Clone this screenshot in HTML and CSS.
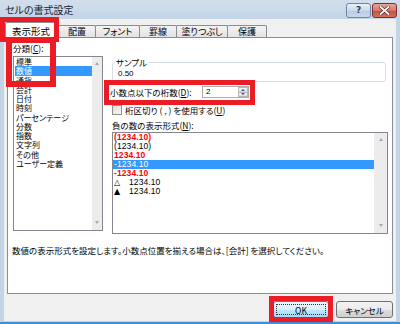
FILE: index.html
```html
<!DOCTYPE html>
<html lang="ja">
<head>
<meta charset="utf-8">
<title>セルの書式設定</title>
<link rel="stylesheet" href="styles.css">
</head>
<body>
<div class="window">
  <div class="titlebar">
    <span class="title">セルの書式設定</span>
    <div class="caption-btns">
      <span class="cbtn help">?</span>
      <span class="cbtn close"><svg width="11" height="9" viewBox="0 0 11 9"><path d="M1.5 1 L9.5 8 M9.5 1 L1.5 8" stroke="#5a2020" stroke-width="3.2" stroke-linecap="square"/><path d="M1.5 1 L9.5 8 M9.5 1 L1.5 8" stroke="#fff" stroke-width="1.8" stroke-linecap="square"/></svg></span>
    </div>
  </div>
  <div class="client">
    <div class="tabs">
      <div class="tab active">表示形式</div>
      <div class="tab w38">配置</div>
      <div class="tab w45">フォント</div>
      <div class="tab w38">罫線</div>
      <div class="tab w52">塗りつぶし</div>
      <div class="tab w40">保護</div>
    </div>
    <div class="panel">
      <div class="cols">
        <div class="left">
          <div class="lbl">分類(<u>C</u>):</div>
          <div class="listbox cat">
            <ul class="items">
              <li>標準</li>
              <li class="sel">数値</li>
              <li>通貨</li>
              <li>会計</li>
              <li>日付</li>
              <li>時刻</li>
              <li>パーセンテージ</li>
              <li>分数</li>
              <li>指数</li>
              <li>文字列</li>
              <li>その他</li>
              <li>ユーザー定義</li>
            </ul>
            <div class="vscroll"><span class="arr up"></span><span class="arr down"></span></div>
          </div>
        </div>
        <div class="right">
          <fieldset class="sample">
            <legend>サンプル</legend>
            <div class="sample-val">0.50</div>
          </fieldset>
          <div class="decimals">
            <span class="dec-lbl">小数点以下の桁数(<u>D</u>):</span>
            <div class="spin">
              <span class="spin-val">2</span>
              <div class="spin-btns">
                <span class="sb"><span class="tri up"></span></span>
                <span class="sb"><span class="tri down"></span></span>
              </div>
            </div>
          </div>
          <div class="chk"><span class="box"></span><span>桁区切り ( , ) を使用する(<u>U</u>)</span></div>
          <div class="lbl neg-lbl">負の数の表示形式(<u>N</u>):</div>
          <div class="listbox neg">
            <ul class="items">
              <li class="red">(1234.10)</li>
              <li>(1234.10)</li>
              <li class="red">1234.10</li>
              <li class="sel">-1234.10</li>
              <li class="red">-1234.10</li>
              <li><span class="tri-g">△</span>1234.10</li>
              <li><span class="tri-g">▲</span>1234.10</li>
            </ul>
            <div class="vscroll wide"><span class="arr up"></span><span class="arr down"></span></div>
          </div>
        </div>
      </div>
      <p class="desc">数値の表示形式を設定します。小数点位置を揃える場合は、[会計] を選択してください。</p>
    </div>
    <div class="buttons">
      <button class="btn ok"><span class="focus">OK</span></button>
      <button class="btn cancel">キャンセル</button>
    </div>
  </div>
</div>
<div class="mark mark-a"></div>
<div class="mark mark-b"></div>
<div class="mark mark-c"></div>
<div class="mark mark-d"></div>
</body>
</html>
```
FILE: styles.css
```css
* { box-sizing: border-box; }
html, body { margin: 0; padding: 0; }
body {
  width: 400px;
  height: 324px;
  overflow: hidden;
  position: relative;
  font-family: "Noto Sans CJK JP", "Noto Sans", sans-serif;
  font-size: 8.5px;
  font-feature-settings: "palt";
  color: #000;
  background: #c3d4e7;
}
u { text-decoration: underline; text-underline-offset: 1px; }

.window {
  width: 400px;
  height: 324px;
  display: flex;
  flex-direction: column;
  background: #c3d4e7;
  padding: 0 4px 1px;
  border-bottom: 2px solid #3f8fd6;
}

.titlebar {
  height: 19px;
  flex: none;
  margin: 0 -4px;
  padding: 0 3px 0 5px;
  display: flex;
  align-items: center;
  justify-content: space-between;
  background: linear-gradient(#d2deec, #c3d4e7);
}
.title { font-size: 10px; color: #1b2533; line-height: 12px; }
.caption-btns { display: flex; gap: 1px; margin-top: 1px; }
.cbtn {
  width: 25px;
  height: 15px;
  border-radius: 3px;
  display: flex;
  align-items: center;
  justify-content: center;
}
.help {
  border: 1px solid #6a86a8;
  background: linear-gradient(#e9f0f8, #cbd9ea 50%, #b9cbe1 51%, #c9d9ec);
  color: #2c3f5c;
  font-family: "DejaVu Sans", sans-serif;
  font-size: 9px;
  font-weight: bold;
  line-height: 1;
}
.close {
  border: 1px solid #7d3030;
  background: linear-gradient(#e6a595, #d67868 50%, #c4503c 51%, #d2705a);
}

.client {
  flex: 1;
  background: #f0f0f0;
  padding: 3px 3px 0;
  display: flex;
  flex-direction: column;
}

.tabs {
  height: 15px;
  display: flex;
  align-items: flex-end;
  position: relative;
  z-index: 2;
}
.tab {
  height: 12px;
  border: 1px solid #898c95;
  border-bottom: none;
  border-radius: 2px 2px 0 0;
  background: linear-gradient(#f3f3f3, #e3e3e3);
  display: flex;
  align-items: center;
  justify-content: center;
  font-size: 9px;
  line-height: 10px;
  margin-left: -1px;
}
.tab.active {
  width: 52px;
  height: 16px;
  margin: 0 2px -1px -2px;
  background: #fff;
  font-size: 9.5px;
}
.w38 { width: 38px; }
.w40 { width: 40px; }
.w45 { width: 45px; }
.w52 { width: 52px; }

.panel {
  height: 257px;
  flex: none;
  border: 1px solid #898c95;
  background: #fff;
  padding: 5px 4px 0 5px;
  position: relative;
  z-index: 1;
}
.cols {
  display: grid;
  grid-template-columns: 90px 1fr;
  column-gap: 7px;
  align-items: start;
}
.lbl { line-height: 10px; height: 10px; }

.listbox {
  border: 1px solid #828790;
  display: flex;
  background: #fff;
}
.listbox.cat { height: 175px; margin-top: 3px; }
.listbox.neg { height: 102px; margin: 2px 0 0 2px; }
.items {
  list-style: none;
  margin: 0;
  padding: 0 0 0 1px;
  flex: 1;
  font-size: 8px;
  line-height: 9.25px;
}
.items li { padding-left: 1px; white-space: nowrap; }
.items li.sel { background: #3399ff; color: #fff; }
.neg .items {
  line-height: 9px;
  font-size: 8.5px;
  letter-spacing: 0.1px;
  padding-left: 0;
  font-family: "Liberation Sans", "DejaVu Sans", sans-serif;
  font-feature-settings: normal;
}
.neg .items li { padding-left: 1px; }
.items li.red { color: #ff0000; font-weight: bold; }
.tri-g { display: inline-block; width: 15px; font-family: "DejaVu Sans", sans-serif; font-size: 8px; }

.vscroll {
  width: 10px;
  background: #ececec;
  display: flex;
  flex-direction: column;
  justify-content: space-between;
  align-items: center;
  padding: 5px 0 6px;
}
.vscroll.wide { width: 13px; }
.arr {
  width: 0;
  height: 0;
  border-left: 2.5px solid transparent;
  border-right: 2.5px solid transparent;
}
.arr.up { border-bottom: 3px solid #a8a8a8; }
.arr.down { border-top: 3px solid #a8a8a8; }

.right { display: flex; flex-direction: column; }
.sample {
  margin: 14px 2px 0 2px;
  padding: 0 4px 2px 2px;
  border: 1px solid #d5dfe5;
  border-radius: 3px;
  min-width: 0;
}
.sample legend {
  padding: 0 1px;
  margin-left: 0;
  line-height: 10px;
  font-size: 8.5px;
}
.sample-val {
  line-height: 10px;
  margin-top: 2px;
  padding-left: 3px;
  font-size: 8px;
  font-family: "Liberation Sans", sans-serif;
}

.decimals {
  display: flex;
  align-items: center;
  height: 12px;
  margin-top: 4px;
}
.dec-lbl { width: 92px; flex: none; line-height: 10px; }
.spin {
  width: 47px;
  height: 12px;
  border: 1px solid #abadb3;
  display: flex;
  align-items: center;
  justify-content: space-between;
}
.spin-val { padding-left: 3px; line-height: 10px; font-size: 8px; font-family: "Liberation Sans", sans-serif; }
.spin-btns { width: 10px; height: 10px; display: flex; flex-direction: column; }
.sb {
  flex: 1;
  border: 1px solid #b8b8b8;
  background: linear-gradient(#f4f4f4, #dcdcdc);
  display: flex;
  align-items: center;
  justify-content: center;
}
.sb + .sb { border-top: none; }
.tri {
  width: 0; height: 0;
  border-left: 2px solid transparent;
  border-right: 2px solid transparent;
}
.tri.up { border-bottom: 2px solid #3d5d9a; }
.tri.down { border-top: 2px solid #3d5d9a; }

.chk {
  display: flex;
  align-items: center;
  height: 11px;
  margin: 6px 0 0 2px;
  line-height: 10px;
}
.chk .box {
  width: 10px;
  height: 10px;
  border: 1px solid #8f8f8f;
  background: linear-gradient(135deg, #dcdcdc, #f8f8f8);
  margin-right: 3px;
  flex: none;
}
.neg-lbl { margin: 5px 0 0 2px; }

.desc {
  margin: 11px 0 0 -1px;
  line-height: 10px;
  font-size: 8.5px;
  white-space: nowrap;
}

.buttons {
  display: flex;
  justify-content: flex-end;
  gap: 7px;
  margin-top: 7px;
}
.btn {
  height: 17px;
  border-radius: 3px;
  font-family: inherit;
  font-size: 8.5px;
  font-feature-settings: "palt";
  padding: 0;
  color: #000;
  display: flex;
  align-items: center;
  justify-content: center;
  line-height: 10px;
}
.btn.ok {
  width: 56px;
  border: 1px solid #3c7fb1;
  background: linear-gradient(#eaf6fd, #d9f0fc 50%, #bee6fd 51%, #a7d9f5);
  padding: 2px;
}
.btn.ok .focus {
  flex: 1;
  align-self: stretch;
  border: 1px dotted #333;
  display: flex;
  align-items: center;
  justify-content: center;
}
.btn.cancel {
  width: 57px;
  border: 1px solid #707070;
  background: linear-gradient(#f2f2f2, #ebebeb 50%, #dddddd 51%, #cfcfcf);
}

.mark {
  position: absolute;
  border: 5px solid #ec1c24;
  z-index: 10;
}
.mark-a { left: 0; top: 17px; width: 59px; height: 25px; }
.mark-b { left: 6px; top: 37px; width: 50px; height: 50px; border-width: 6px; }
.mark-c { left: 104px; top: 80px; width: 151px; height: 25px; }
.mark-d { left: 269px; top: 296px; width: 64px; height: 26px; }
```
